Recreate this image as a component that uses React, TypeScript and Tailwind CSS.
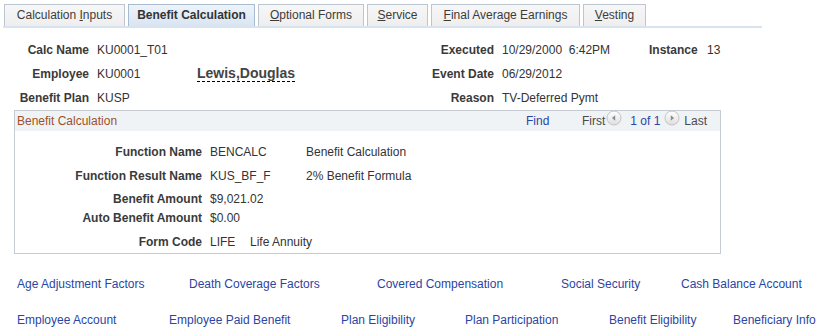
import React from "react";

const tabs = [
  { pre: "Calculation ", key: "I", post: "nputs", w: "w-[121px]" },
  { pre: "Benefit Calculation", key: "", post: "", w: "w-[127px]", active: true },
  { pre: "", key: "O", post: "ptional Forms", w: "w-[106px]" },
  { pre: "", key: "S", post: "ervice", w: "w-[61px]" },
  { pre: "", key: "F", post: "inal Average Earnings", w: "w-[149px]" },
  { pre: "", key: "V", post: "esting", w: "w-[63px]" },
];

const linksTop = [
  { label: "Age Adjustment Factors", w: "w-[172px]" },
  { label: "Death Coverage Factors", w: "w-[188px]" },
  { label: "Covered Compensation", w: "w-[184px]" },
  { label: "Social Security", w: "w-[120px]" },
  { label: "Cash Balance Account", w: "w-[140px]" },
];

const linksBottom = [
  { label: "Employee Account", w: "w-[152px]" },
  { label: "Employee Paid Benefit", w: "w-[172px]" },
  { label: "Plan Eligibility", w: "w-[124px]" },
  { label: "Plan Participation", w: "w-[144px]" },
  { label: "Benefit Eligibility", w: "w-[124px]" },
  { label: "Beneficiary Info", w: "w-[90px]" },
];

function NavArrow({ dir }: { dir: "left" | "right" }) {
  return (
    <svg width="16" height="16" viewBox="0 0 16 16" className="shrink-0 block">
      <defs>
        <linearGradient id={`g-${dir}`} x1="0" y1="0" x2="0" y2="1">
          <stop offset="0" stopColor="#ffffff" />
          <stop offset="1" stopColor="#dedede" />
        </linearGradient>
      </defs>
      <circle cx="8" cy="8" r="7" fill={`url(#g-${dir})`} stroke="#c4c4c4" />
      {dir === "left" ? (
        <path d="M9.2 5.2 L6 8 L9.2 10.8 Z" fill="#8a8a8a" />
      ) : (
        <path d="M6.8 5.2 L10 8 L6.8 10.8 Z" fill="#8a8a8a" />
      )}
    </svg>
  );
}

function Field({ label, value, lw, vw }: { label: string; value: string; lw: string; vw: string }) {
  return (
    <>
      <span className={`${lw} text-right font-bold text-[#3a3a3a]`}>{label}</span>
      <span className={`${vw} pl-[8px] whitespace-pre`}>{value}</span>
    </>
  );
}

export default function App() {
  return (
    <div className="w-[833px] h-[336px] bg-white font-['Liberation_Sans',Arial,sans-serif] text-[12px] text-[#333333] overflow-hidden">
      {/* tabs */}
      <div className="pt-[4px] ml-[3px] w-[759px] border-b-2 border-[#d8e3f0]">
        <div className="flex gap-[3px] pl-[1px]">
          {tabs.map((t) => (
            <div
              key={t.pre + t.post}
              className={
                t.active
                  ? `${t.w} h-[22px] leading-[21px] text-center border border-b-0 border-[#a9bccf] bg-gradient-to-b from-[#eef3f9] to-[#d9e5f2] font-bold text-[#333]`
                  : `${t.w} h-[22px] leading-[21px] text-center border border-b-0 border-[#bcc6d0] bg-gradient-to-b from-[#f7f7f7] to-[#eeeeee] text-[#3c3c3c]`
              }
            >
              {t.pre}
              {t.key && <span className="underline">{t.key}</span>}
              {t.post}
            </div>
          ))}
        </div>
      </div>

      {/* header fields */}
      <div className="mt-[10px]">
        <div className="flex h-[24px] leading-[24px]">
          <Field label="Calc Name" value="KU0001_T01" lw="w-[89px]" vw="w-[108px]" />
          <span className="w-[200px]" />
          <Field label="Executed" value="10/29/2000  6:42PM" lw="w-[97px]" vw="w-[155px]" />
          <span className="w-[48px] text-right font-bold text-[#3a3a3a]">Instance</span>
          <span className="pl-[10px]">13</span>
        </div>
        <div className="flex h-[24px] leading-[24px]">
          <Field label="Employee" value="KU0001" lw="w-[89px]" vw="w-[108px]" />
          <span className="w-[200px] flex items-center">
            <span className="text-[14px] font-bold text-[#444] leading-[15px] border-b border-dashed border-black">
              Lewis,Douglas
            </span>
          </span>
          <Field label="Event Date" value="06/29/2012" lw="w-[97px]" vw="w-[155px]" />
        </div>
        <div className="flex h-[24px] leading-[24px]">
          <Field label="Benefit Plan" value="KUSP" lw="w-[89px]" vw="w-[108px]" />
          <span className="w-[200px]" />
          <Field label="Reason" value="TV-Deferred Pymt" lw="w-[97px]" vw="w-[155px]" />
        </div>
      </div>

      {/* benefit calculation box */}
      <div className="ml-[14px] w-[707px] h-[144px] border border-[#c6ccd2]">
        <div className="flex items-center h-[20px] bg-[#f0f3f5]">
          <span className="w-[511px] pl-[2px] text-[#a0502a]">Benefit Calculation</span>
          <span className="w-[56px] text-[#2a46a3]">Find</span>
          <span className="text-[#4a4a4a]">First</span>
          <span className="ml-[1px] mb-[7px]"><NavArrow dir="left" /></span>
          <span className="ml-[8px] text-[#2a46a3]">1 of 1</span>
          <span className="ml-[4px] mb-[7px]"><NavArrow dir="right" /></span>
          <span className="ml-[4px] text-[#4a4a4a]">Last</span>
        </div>
        <div className="pt-[12px] flex flex-col">
          <div className="flex h-[18px] leading-[18px]">
            <Field label="Function Name" value="BENCALC" lw="w-[187px]" vw="w-[104px]" />
            <span>Benefit Calculation</span>
          </div>
          <div className="flex h-[18px] leading-[18px] mt-[6px]">
            <Field label="Function Result Name" value="KUS_BF_F" lw="w-[187px]" vw="w-[104px]" />
            <span>2% Benefit Formula</span>
          </div>
          <div className="flex h-[18px] leading-[18px] mt-[5px]">
            <Field label="Benefit Amount" value="$9,021.02" lw="w-[187px]" vw="w-[104px]" />
          </div>
          <div className="flex h-[18px] leading-[18px] mt-[1px]">
            <Field label="Auto Benefit Amount" value="$0.00" lw="w-[187px]" vw="w-[104px]" />
          </div>
          <div className="flex h-[18px] leading-[18px] mt-[6px]">
            <Field label="Form Code" value="LIFE" lw="w-[187px]" vw="w-[48px]" />
            <span>Life Annuity</span>
          </div>
        </div>
      </div>

      {/* related links */}
      <div className="pl-[17px] mt-[21px] flex h-[18px] leading-[18px] text-[#2a46a3]">
        {linksTop.map((l) => (
          <span key={l.label} className={`${l.w} shrink-0 whitespace-nowrap`}>{l.label}</span>
        ))}
      </div>
      <div className="pl-[17px] mt-[18px] flex h-[18px] leading-[18px] text-[#2a46a3]">
        {linksBottom.map((l) => (
          <span key={l.label} className={`${l.w} shrink-0 whitespace-nowrap`}>{l.label}</span>
        ))}
      </div>
    </div>
  );
}
